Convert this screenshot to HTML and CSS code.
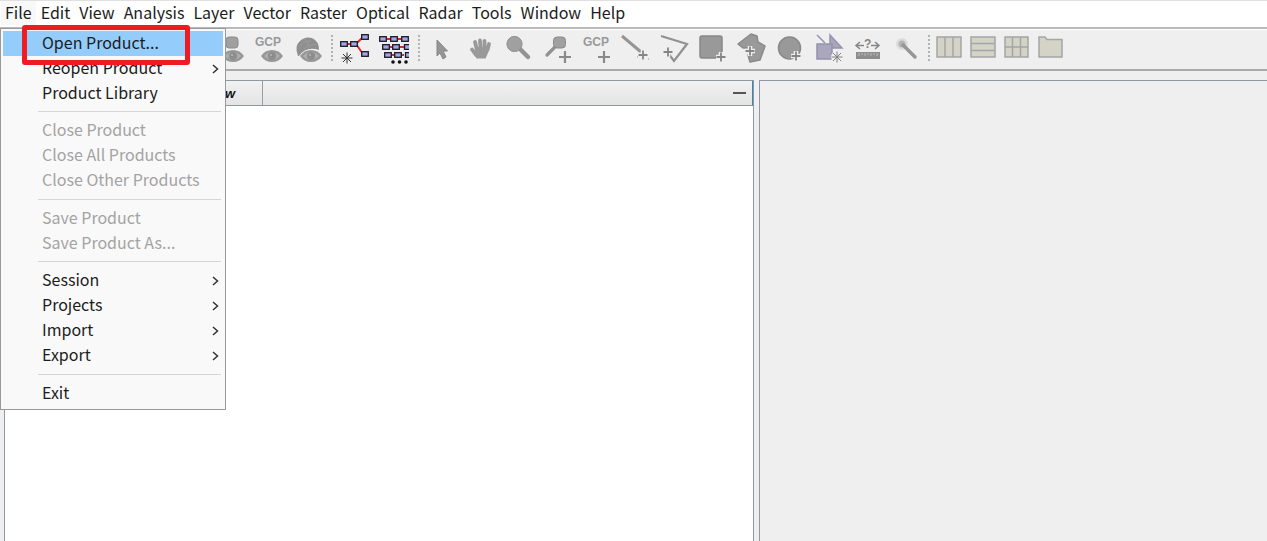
FILE: index.html
```html
<!DOCTYPE html>
<html lang="en">
<head>
<meta charset="utf-8">
<title>Product Explorer</title>
<link rel="stylesheet" href="styles.css">
</head>
<body>
<div class="app">
  <nav class="menubar">
    <button class="menu-title open">File</button>
    <button class="menu-title">Edit</button>
    <button class="menu-title">View</button>
    <button class="menu-title">Analysis</button>
    <button class="menu-title">Layer</button>
    <button class="menu-title">Vector</button>
    <button class="menu-title">Raster</button>
    <button class="menu-title">Optical</button>
    <button class="menu-title">Radar</button>
    <button class="menu-title">Tools</button>
    <button class="menu-title">Window</button>
    <button class="menu-title">Help</button>
  </nav>

  <svg width="0" height="0" class="defs">
    <defs>
      <g id="eye"><path d="M-11 0Q-7-6 0-6T11 0Q7 6 0 6T-11 0Z" fill="#979797"/><path d="M-8 0Q-4-4 0-4T8 0Q4 4 0 4T-8 0Z" fill="#adadad"/><circle r="4" fill="#8d8d8d"/><circle cx="-1" cy="-1" r="1" fill="#b8b8b8"/></g>
      <g id="node"><rect x=".7" y=".7" width="6.600" height="4.600" fill="#a4a4e8" stroke="#1a1a22" stroke-width="1.300"/></g>
      <path id="plus" d="M-6 0H6M0-6V6" stroke-width="2.2"/>
      <g id="plus-small"><path d="M-5 0H5M0-5V5" stroke="#efefef" stroke-width="4.5"/><path d="M-4.5 0H4.5M0-4.5V4.5" stroke="#858585" stroke-width="1.8"/></g>
      <path id="star" d="M-5.5 0H5.5M0-5.5V5.5M-4-4L4 4M-4 4L4-4" stroke-width="1"/>
    </defs>
  </svg>

  <div class="toolbar">
    <div class="group first">
      <button class="tool" aria-label="Pin overlay"><svg viewBox="211 30 39 38"><rect x="226" y="37" width="12" height="11" rx="3" fill="#a0a0a0" stroke="#8c8c8c"/><use href="#eye" x="233" y="56"/></svg></button>
      <button class="tool" aria-label="GCP overlay"><svg viewBox="250 30 39 38"><text x="255" y="46" class="gcp">GCP</text><use href="#eye" x="272" y="56"/></svg></button>
      <button class="tool" aria-label="Mask overlay"><svg viewBox="289 30 39 38"><path d="M298 56Q294 46 300 41Q305 36 312 38Q319 41 319 50Q306 46 299 56Z" fill="#8f8f8f"/><path d="M300 46Q304 40 311 41M304 49Q310 43 317 45M305 39Q309 43 309 48" fill="none" stroke="#9c9c9c"/><use href="#eye" x="311" y="56"/></svg></button>
    </div>
    <i class="grip"></i>
    <div class="group graphs">
      <button class="tool" aria-label="Graph builder"><svg viewBox="336 30 40 38"><path d="M347 44H356L363 37M356 44L363 54" fill="none" stroke="#e0262b" stroke-width="2"/><use href="#node" x="340" y="41"/><use href="#node" x="350" y="41"/><use href="#node" x="361" y="34"/><use href="#node" x="361" y="51"/><use href="#star" x="347" y="58" stroke="#333"/></svg></button>
      <button class="tool" aria-label="Batch processing"><svg viewBox="376 30 40 38"><path d="M386 39H402M388 47H404M391 55H404" stroke="#e0262b" stroke-width="2"/><use href="#node" x="379" y="36"/><use href="#node" x="390" y="36"/><use href="#node" x="401" y="36"/><use href="#node" x="382" y="44"/><use href="#node" x="392" y="44"/><path d="M409 44.700H404.500V49.300H409" fill="#a4a4e8" stroke="#1a1a22" stroke-width="1.300"/><use href="#node" x="384" y="52"/><use href="#node" x="394" y="52"/><path d="M409 52.700H405.500V57.300H409" fill="#a4a4e8" stroke="#1a1a22" stroke-width="1.300"/><g fill="#111"><circle cx="393" cy="62" r="1.8"/><circle cx="399.500" cy="62" r="1.8"/><circle cx="406" cy="62" r="1.8"/></g></svg></button>
    </div>
    <i class="grip"></i>
    <div class="group tools">
      <button class="tool" aria-label="Select"><svg viewBox="427 30 38 38"><path d="M437 40V56L440 53L443 59L446 57L443 51H447.500Z" fill="#969696" stroke="#858585"/></svg></button>
      <button class="tool" aria-label="Pan"><svg viewBox="465 30 38 38"><g fill="none" stroke="#999" stroke-width="3.800" stroke-linecap="round"><path d="M477 50L475 42M480.500 48L480 40.500M484.500 48V41M487.500 50L489 44M476 55L472 49.500"/></g><path d="M475 47H489L488 53L485.500 58.500H476.500Q474 55 475 47Z" fill="#999"/></svg></button>
      <button class="tool" aria-label="Zoom"><svg viewBox="503 30 38 38"><path d="M520 49L528 57" stroke="#939393" stroke-width="4.500" stroke-linecap="round"/><circle cx="514.500" cy="44" r="7.600" fill="#a0a0a0" stroke="#8f8f8f"/></svg></button>
      <button class="tool" aria-label="Place pin"><svg viewBox="541 30 38 38"><path d="M556 46L547 55" stroke="#929292" stroke-width="3.200" stroke-linecap="round"/><rect x="553.500" y="37" width="12" height="11" rx="3.500" fill="#a0a0a0" stroke="#898989"/><use href="#plus" x="565" y="57" stroke="#8a8a8a"/></svg></button>
      <button class="tool" aria-label="Place GCP"><svg viewBox="579 30 38 38"><text x="583" y="46" class="gcp">GCP</text><use href="#plus" x="604" y="57" stroke="#8a8a8a"/></svg></button>
      <button class="tool" aria-label="Draw line"><svg viewBox="617 30 38 38"><path d="M622 36L641 52" stroke="#959595" stroke-width="3"/><use href="#plus-small" x="643" y="55"/><path d="M637 57h1M648 59h1" stroke="#999"/></svg></button>
      <button class="tool" aria-label="Draw polyline"><svg viewBox="655 30 38 38"><path d="M661 36L687 44L674 61L668 53" fill="none" stroke="#909090" stroke-width="2.200"/><use href="#plus-small" x="668" y="52"/></svg></button>
      <button class="tool" aria-label="Draw rectangle"><svg viewBox="693 30 38 38"><rect x="700" y="36" width="22" height="22" rx="2" fill="#999" stroke="#888" stroke-width="1.500"/><use href="#plus-small" x="721" y="57"/></svg></button>
      <button class="tool" aria-label="Draw polygon"><svg viewBox="731 30 38 38"><path d="M738 44L751 34L757 36L758 42L765 46L760 60L750 62L748 55L751 48H743Z" fill="#999" stroke="#8a8a8a" stroke-width="1.500" stroke-linejoin="round"/><use href="#plus-small" x="750" y="51"/></svg></button>
      <button class="tool" aria-label="Draw ellipse"><svg viewBox="769 30 38 38"><circle cx="789.500" cy="48" r="11" fill="#999" stroke="#888" stroke-width="1.500"/><use href="#plus-small" x="796" y="56"/></svg></button>
      <button class="tool" aria-label="Create vector data container"><svg viewBox="807 30 38 38"><path d="M817 35L825 43M830 35L842 48H830Z" fill="#a9a6ba" stroke="#9693b0" stroke-width="1.500"/><rect x="817" y="44" width="15" height="15" fill="#aaa7bd" stroke="#9491af" stroke-width="1.500"/><circle cx="837" cy="57" r="6" fill="#efefef"/><use href="#star" x="837" y="57" stroke="#808080"/></svg></button>
      <button class="tool" aria-label="Range finder"><svg viewBox="845 30 38 38"><path d="M856 45.500H864M871 45.500H879M860 42L856 45.500L860 49M875 42L879 45.500L875 49" fill="none" stroke="#858585" stroke-width="1.500"/><text x="864" y="48" class="query">?</text><rect x="856" y="52" width="24" height="7" fill="#8d8d8d"/><path d="M859 53v3M862 53v2M865 53v3M868 53v2M871 53v3M874 53v2M877 53v3" stroke="#bbb"/></svg></button>
      <button class="tool" aria-label="Magic wand"><svg viewBox="883 30 38 38"><circle cx="902" cy="44" r="6" fill="#dcdcdc"/><circle cx="902" cy="44" r="3.500" fill="#b4b4b4"/><path d="M903 45L915 57" stroke="#969696" stroke-width="3.500" stroke-linecap="round"/></svg></button>
    </div>
    <i class="grip"></i>
    <div class="group layouts">
      <button class="tool" aria-label="Tile horizontally"><svg viewBox="932 30 34 38"><path class="tile" d="M937 37h24v20h-24zM945 37v20M953 37v20"/></svg></button>
      <button class="tool" aria-label="Tile vertically"><svg viewBox="966 30 34 38"><path class="tile" d="M971 37h24v20h-24zM971 43.500h24M971 50.500h24"/></svg></button>
      <button class="tool" aria-label="Tile evenly"><svg viewBox="1000 30 34 38"><path class="tile" d="M1005 37h23v20h-23zM1005 47h23M1012.500 37v20M1020.500 37v20"/></svg></button>
      <button class="tool" aria-label="Tile single"><svg viewBox="1034 30 34 38"><path class="tile" d="M1039 57V37h6l2 2.500h15v17.500z"/></svg></button>
    </div>
  </div>

  <main class="workspace">
    <section class="panel explorer">
      <header class="panel-head">
        <div class="tab">w</div>
        <button class="minimize" aria-label="Minimize"></button>
      </header>
    </section>
    <section class="panel editor"></section>
  </main>

  <div class="dropdown">
    <button class="item active">Open Product...</button>
    <button class="item">Reopen Product<svg class="chev" viewBox="0 0 7 10"><path d="M1 1L5.500 5L1 9"/></svg></button>
    <button class="item">Product Library</button>
    <hr>
    <button class="item" disabled>Close Product</button>
    <button class="item" disabled>Close All Products</button>
    <button class="item" disabled>Close Other Products</button>
    <hr class="roomy">
    <button class="item" disabled>Save Product</button>
    <button class="item" disabled>Save Product As...</button>
    <hr>
    <button class="item">Session<svg class="chev" viewBox="0 0 7 10"><path d="M1 1L5.500 5L1 9"/></svg></button>
    <button class="item">Projects<svg class="chev" viewBox="0 0 7 10"><path d="M1 1L5.500 5L1 9"/></svg></button>
    <button class="item">Import<svg class="chev" viewBox="0 0 7 10"><path d="M1 1L5.500 5L1 9"/></svg></button>
    <button class="item">Export<svg class="chev" viewBox="0 0 7 10"><path d="M1 1L5.500 5L1 9"/></svg></button>
    <hr class="roomy">
    <button class="item">Exit</button>
  </div>
  <div class="callout"></div>
</div>
</body>
</html>
```

FILE: styles.css
```css
* { box-sizing: border-box; }

body {
  margin: 0;
  background: #efefef;
  font-family: "Noto Sans CJK SC", "Noto Sans", sans-serif;
  font-size: 16px;
  color: #1c1c1c;
}

button {
  margin: 0;
  padding: 0;
  border: 0;
  background: none;
  font: inherit;
  color: inherit;
}

.app {
  position: relative;
  display: flex;
  flex-direction: column;
  height: 100vh;
  overflow: hidden;
}

.defs { position: absolute; }

.menubar {
  display: flex;
  flex: none;
  gap: 1px;
  height: 29px;
  padding: 0 1px 2px;
  border-top: 1px solid #e0e0e0;
  border-bottom: 2px solid #b9b9b9;
  background: #fff;
}

.menu-title {
  padding: 0 4px 2px;
  line-height: 22px;
}

.menu-title.open { background: #f8f8f8; }

.toolbar {
  display: flex;
  flex: none;
  height: 42px;
  padding-left: 211px;
  border-top: 1px solid #fff;
  border-bottom: 2px solid #a9a9a9;
}

.group { display: flex; flex: none; }
.tool { width: 39px; height: 38px; }
.tool svg { display: block; width: 100%; height: 38px; overflow: visible; }
.graphs .tool { width: 40px; }
.tools { padding: 0 5px; }
.tools .tool { width: 38px; }
.layouts .tool { width: 34px; }

.gcp {
  font: 700 12px "Liberation Sans", Arial, sans-serif;
  fill: #999;
}

.query {
  font: 700 12px "Liberation Sans", Arial, sans-serif;
  fill: #858585;
}

.tile {
  fill: #d3d4c6;
  stroke: #a3a5a6;
  stroke-width: 1.5;
}

.grip {
  flex: none;
  width: 2px;
  height: 28px;
  margin: 5px 2px 0;
  background: repeating-linear-gradient(#b2b2b2 0 2px, transparent 2px 4px);
}

.grip:first-of-type { margin: 5px 3px 0; }

.workspace {
  display: grid;
  grid-template-columns: minmax(0, 750fr) minmax(0, 508fr);
  flex: 1;
  gap: 5px;
  padding: 9px 0 0 4px;
}

.panel {
  border: 1px solid #8f98a3;
  border-bottom: 0;
}

.explorer { background: #fff; }
.editor { border-right: 0; }

.panel-head {
  display: flex;
  justify-content: space-between;
  height: 25px;
  border-right: 1px solid #3c83b5;
  border-bottom: 1px solid #8f98a3;
  background: linear-gradient(#f1f1f1, #e4e4e4);
}

.tab {
  width: 258px;
  padding-right: 27px;
  border-right: 1px solid #9a9fa6;
  font: italic 700 13px/25px "Liberation Sans", Arial, sans-serif;
  text-align: right;
  color: #111;
}

.minimize {
  align-self: center;
  width: 13px;
  height: 2px;
  margin-right: 6px;
  background: #555;
}

.dropdown {
  position: absolute;
  top: 28px;
  left: 0;
  display: flex;
  flex-direction: column;
  width: 226px;
  padding: 2px 2px 3px;
  border: 1px solid #999;
  background: #f9f9f9;
}

.item {
  display: flex;
  align-items: flex-start;
  justify-content: space-between;
  height: 25px;
  padding: 0 4px 0 39px;
  line-height: 22px;
  text-align: left;
}

.item.active { background: #94ccfb; }
.item:disabled { color: #a3a3a3; }

.chev {
  align-self: center;
  width: 7px;
  height: 10px;
  fill: none;
  stroke: #333;
  stroke-width: 1.5;
}

hr {
  width: auto;
  height: 1px;
  margin: 5px 2px 6px 35px;
  border: 0;
  background: #d5d5d5;
}

hr.roomy { margin-top: 6px; }

.callout {
  position: absolute;
  top: 25px;
  left: 22px;
  width: 168px;
  height: 40px;
  border: 5px solid #ed1c24;
  border-radius: 3px;
  pointer-events: none;
}
```
